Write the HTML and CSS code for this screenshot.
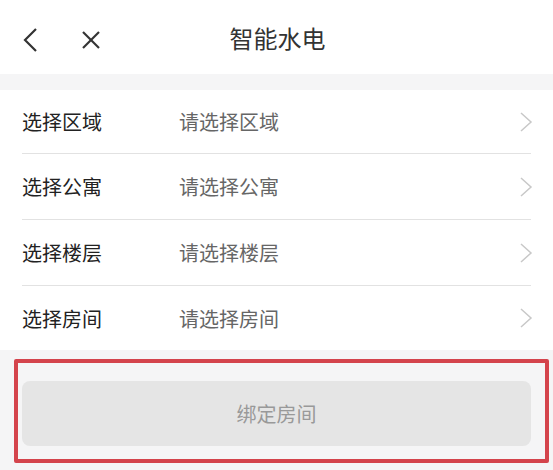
FILE: index.html
```html
<!DOCTYPE html>
<html>

<head>
    <meta charset="utf-8">
    <link rel="stylesheet" href="styles.css">
</head>

<body>
    <header class="nav-bar">
        <div class="nav-icons">
            <svg class="icon-back" width="16" height="24" viewBox="0 0 16 24">
                <polyline points="14,1 3,12 14,23" fill="none" stroke="#333" stroke-width="2.2" />
            </svg>
            <svg class="icon-close" width="20" height="20" viewBox="0 0 20 20">
                <line x1="2" y1="2" x2="18" y2="18" stroke="#333" stroke-width="2.2" />
                <line x1="18" y1="2" x2="2" y2="18" stroke="#333" stroke-width="2.2" />
            </svg>
        </div>
        <h1 class="nav-title">智能水电</h1>
    </header>

    <div class="gap"></div>

    <ul class="select-list">
        <li class="select-row">
            <span class="row-label">选择区域</span>
            <span class="row-value">请选择区域</span>
            <svg class="chevron" width="14" height="22" viewBox="0 0 14 22">
                <polyline points="2,2 12,11 2,20" fill="none" stroke="#c8c8c8" stroke-width="1.5" />
            </svg>
        </li>
        <li class="select-row">
            <span class="row-label">选择公寓</span>
            <span class="row-value">请选择公寓</span>
            <svg class="chevron" width="14" height="22" viewBox="0 0 14 22">
                <polyline points="2,2 12,11 2,20" fill="none" stroke="#c8c8c8" stroke-width="1.5" />
            </svg>
        </li>
        <li class="select-row">
            <span class="row-label">选择楼层</span>
            <span class="row-value">请选择楼层</span>
            <svg class="chevron" width="14" height="22" viewBox="0 0 14 22">
                <polyline points="2,2 12,11 2,20" fill="none" stroke="#c8c8c8" stroke-width="1.5" />
            </svg>
        </li>
        <li class="select-row">
            <span class="row-label">选择房间</span>
            <span class="row-value">请选择房间</span>
            <svg class="chevron" width="14" height="22" viewBox="0 0 14 22">
                <polyline points="2,2 12,11 2,20" fill="none" stroke="#c8c8c8" stroke-width="1.5" />
            </svg>
        </li>
    </ul>

    <div class="bottom">
        <!-- red box marks the disabled bind button -->
        <div class="highlight">
            <button type="button" class="bind-btn" disabled>绑定房间</button>
        </div>
    </div>
</body>

</html>
```

FILE: styles.css
```css
body {
    margin: 0;
    padding: 0;
    width: 553px;
    height: 470px;
    overflow: hidden;
    background-color: #f5f5f6;
    font-family: "Noto Sans CJK SC", "Noto Sans", sans-serif;
}

.nav-bar {
    position: relative;
    height: 74px;
    background-color: #fff;
    display: flex;
    align-items: center;
    justify-content: center;
}

.nav-icons {
    position: absolute;
    left: 22px;
    top: 28px;
    display: flex;
    align-items: center;
    gap: 43px;
}

.nav-title {
    margin: 0;
    font-size: 24px;
    font-weight: normal;
    color: #333;
    padding-left: 2px;
}

.gap {
    height: 16px;
}

.select-list {
    list-style: none;
    margin: 0;
    padding: 0 22px;
    background-color: #fff;
}

.select-row {
    height: 65px;
    display: flex;
    align-items: center;
    border-bottom: 1px solid #e2e2e2;
}

.select-row:first-child {
    height: 63px;
}

.select-row:last-child {
    height: 64px;
    border-bottom: none;
}

.row-label {
    width: 157px;
    font-size: 20px;
    color: #222;
}

.row-value {
    flex: 1;
    font-size: 20px;
    color: #666;
}

.chevron {
    margin-right: -2px;
}

.bottom {
    padding: 9px 4px 3px 14px;
}

.highlight {
    border: 4px solid #d4444c;
    border-radius: 2px;
    padding: 18px 14px 13px 4px;
}

.bind-btn {
    display: block;
    width: 100%;
    height: 65px;
    border: none;
    border-radius: 8px;
    background-color: #e5e5e5;
    color: #999;
    font-family: inherit;
    font-size: 20px;
}
```
